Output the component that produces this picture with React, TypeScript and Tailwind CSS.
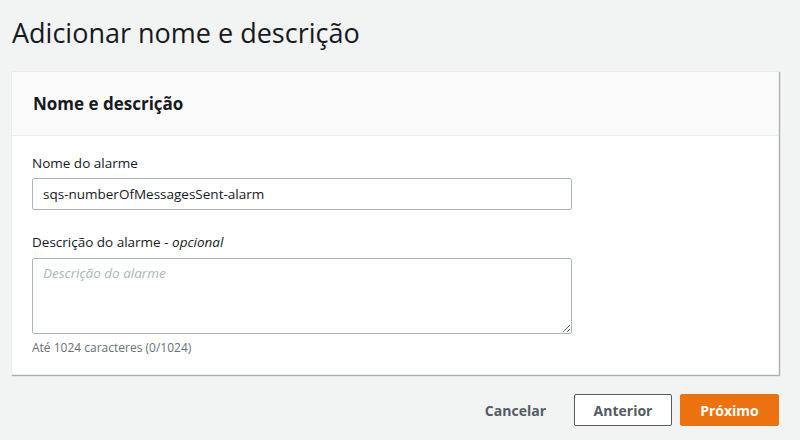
export default function App() {
  return (
    <div
      className="w-[800px] h-[440px] bg-[#f2f3f3] text-[#16191f] overflow-hidden"
      style={{ fontFamily: '"Open Sans", "Noto Sans", sans-serif' }}
    >
      <h1 className="px-[12px] pt-[15px] text-[27px] leading-[36px] font-normal">
        Adicionar nome e descrição
      </h1>

      {/* Card */}
      <div className="mx-[11px] mt-[20px] w-[768px] bg-white border border-[#eaeded] shadow-[1px_1px_1px_0_rgba(0,28,36,0.3)]">
        <div className="h-[64px] bg-[#fafafa] border-b border-[#eaeded] flex items-center px-[21px]">
          <h2 className="text-[17px] font-bold leading-[22px]">Nome e descrição</h2>
        </div>

        <div className="px-[20px] pt-[16px] pb-[18px]">
          <label className="block text-[13.5px] leading-[22px] mb-[4px]">Nome do alarme</label>
          <input
            type="text"
            defaultValue="sqs-numberOfMessagesSent-alarm"
            className="block w-[540px] h-[32px] px-[10px] text-[13.5px] text-[#16191f] bg-white border border-[#aab7b8] rounded-[2px] outline-none"
          />

          <label className="block text-[13.5px] leading-[22px] mt-[21px] mb-[5px]">
            Descrição do alarme - <i>opcional</i>
          </label>
          <textarea
            placeholder="Descrição do alarme"
            className="block w-[540px] h-[76px] px-[10px] py-[4px] text-[13.5px] bg-white border border-[#aab7b8] rounded-[2px] outline-none placeholder:italic placeholder:text-[#aab7b8] resize-y"
          />
          <p className="mt-[6px] text-[12px] leading-[16px] text-[#687078]">Até 1024 caracteres (0/1024)</p>
        </div>
      </div>

      {/* Actions */}
      <div className="flex justify-end items-center gap-[8px] pr-[21px] mt-[19px]">
        <button className="h-[32px] px-[20px] text-[14px] font-bold text-[#545b64]">Cancelar</button>
        <button className="h-[32px] w-[98px] text-[14px] font-bold text-[#545b64] bg-white border border-[#545b64] rounded-[2px]">
          Anterior
        </button>
        <button className="h-[32px] w-[99px] text-[14px] font-bold text-white bg-[#ec7211] border border-[#ec7211] rounded-[2px]">
          Próximo
        </button>
      </div>
    </div>
  );
}
